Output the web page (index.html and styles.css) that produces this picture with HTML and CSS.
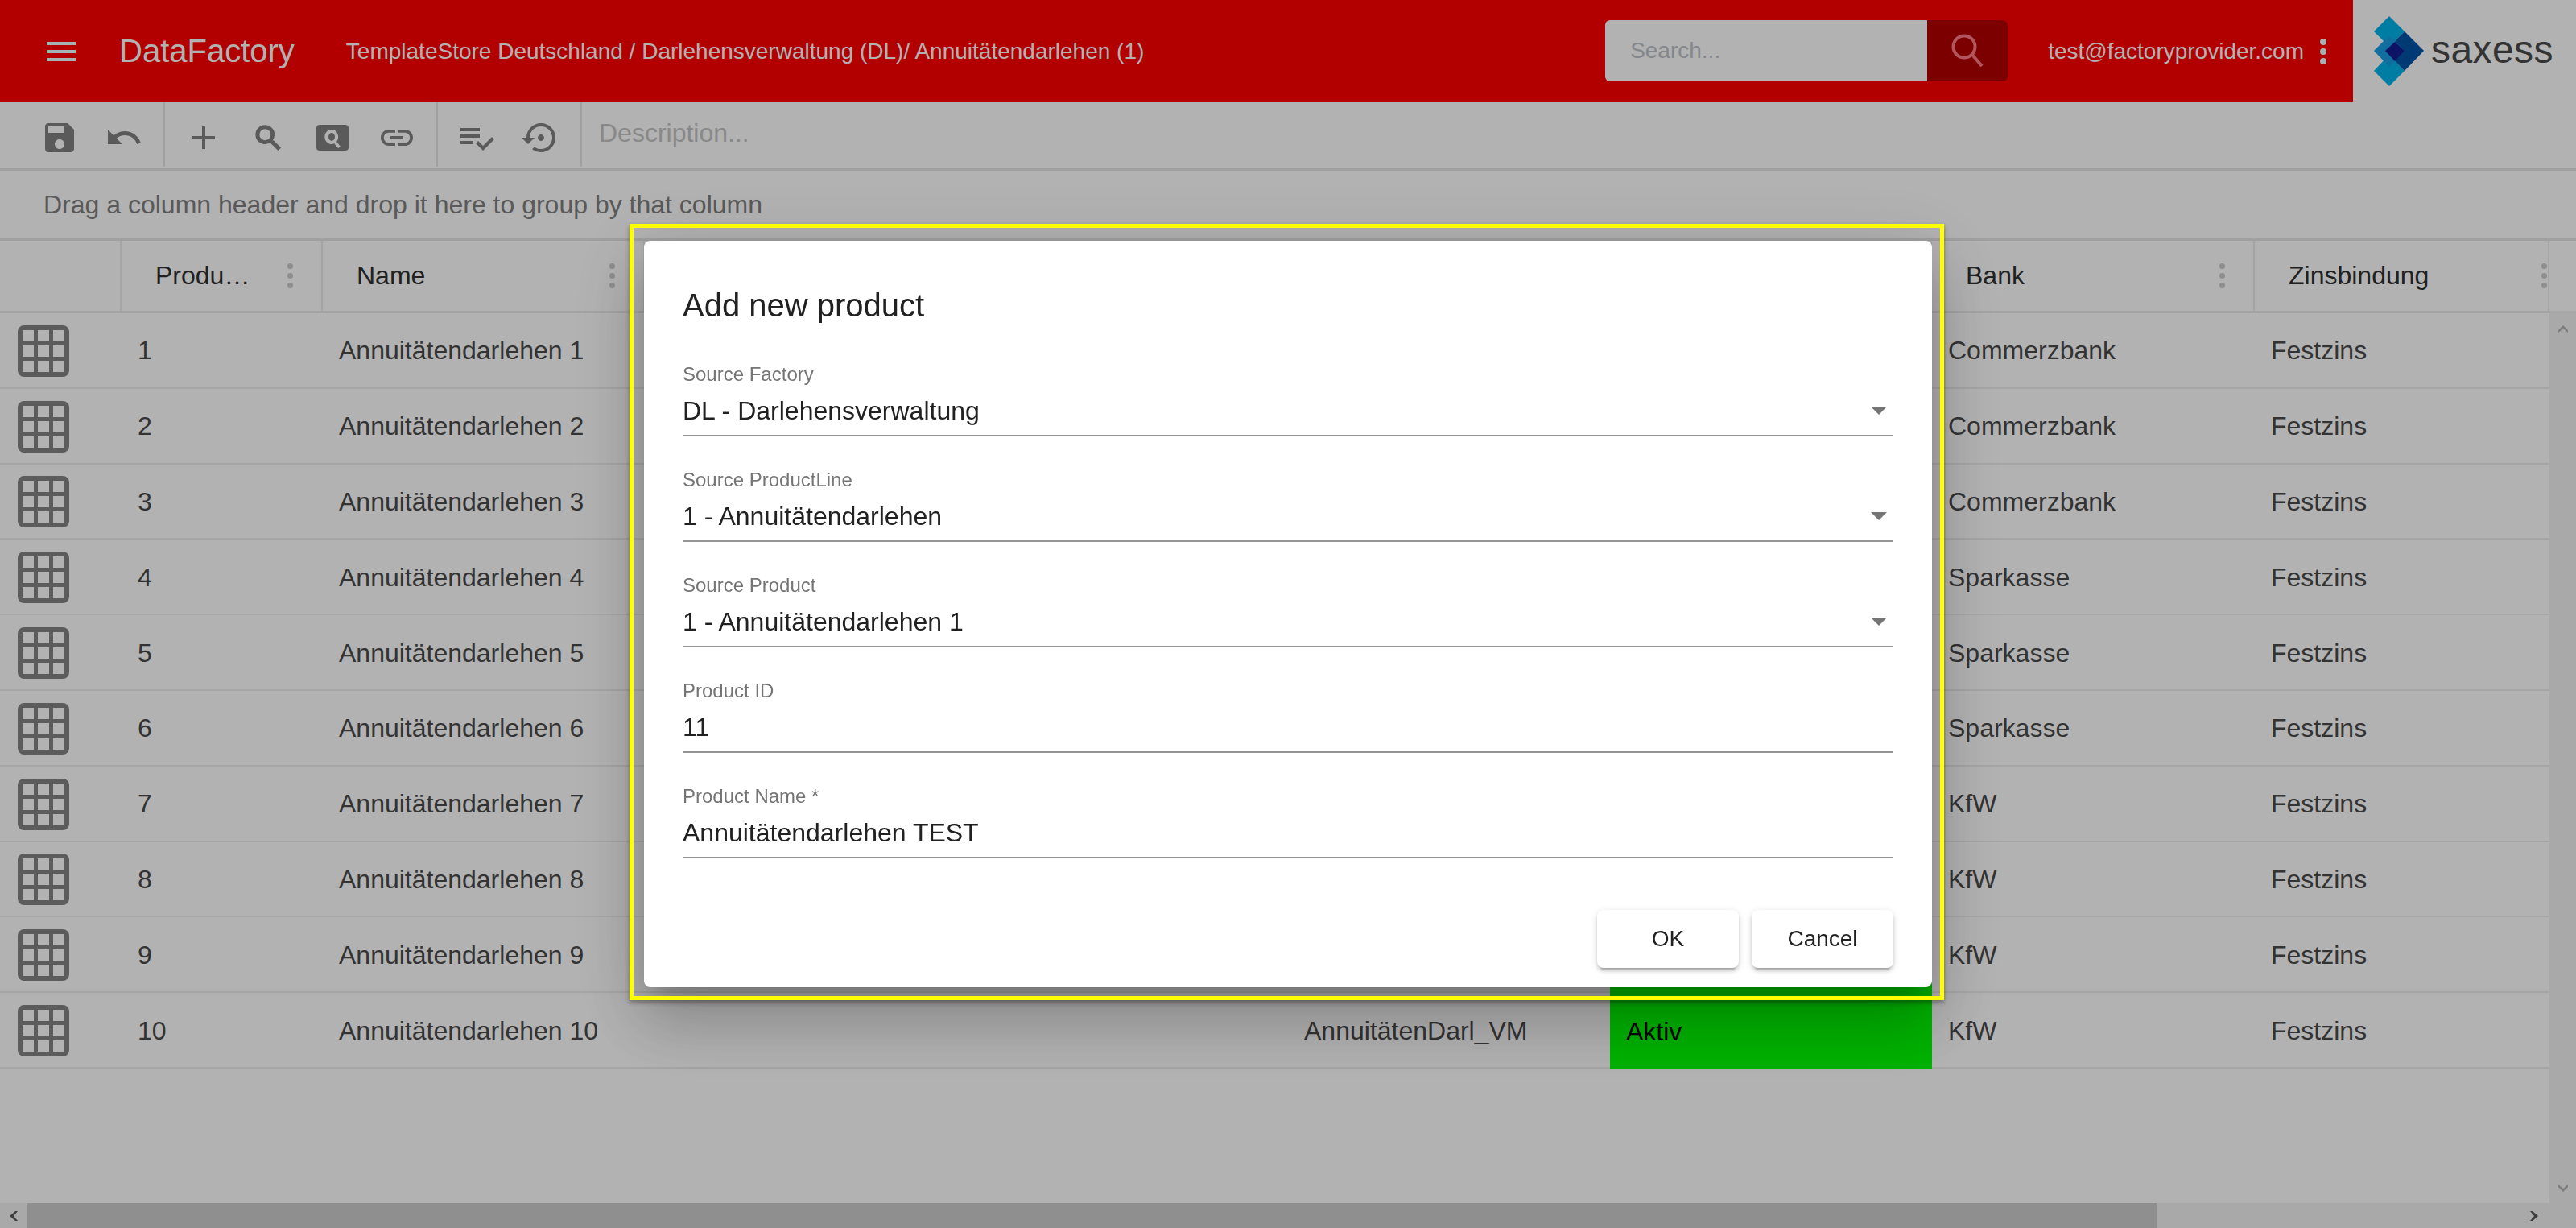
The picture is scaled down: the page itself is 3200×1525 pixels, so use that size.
FILE: index.html
```html
<!DOCTYPE html>
<html lang="en">
<head>
  <meta charset="UTF-8">
  <title>DataFactory - Add new product</title>
  <link rel="stylesheet" href="styles.css">
</head>
<body>

  <svg class="defs" width="0" height="0">
    <symbol id="i-grid" viewBox="0 0 64 64">
      <path fill-rule="evenodd" d="M8 0h48a8 8 0 0 1 8 8v48a8 8 0 0 1-8 8H8a8 8 0 0 1-8-8V8a8 8 0 0 1 8-8zM6 6v14h14V6zM25 6v14h14V6zM44 6v14h14V6zM6 25v14h14V25zM25 25v14h14V25zM44 25v14h14V25zM6 44v14h14V44zM25 44v14h14V44zM44 44v14h14V44z"/>
    </symbol>
    <symbol id="i-search" viewBox="0 0 24 24">
      <path d="M15.5 14h-.79l-.28-.27C15.41 12.59 16 11.11 16 9.5 16 5.91 13.09 3 9.5 3S3 5.91 3 9.5 5.91 16 9.5 16c1.61 0 3.09-.59 4.23-1.57l.27.28v.79l5 4.99L20.49 19l-4.99-5zm-6 0C7.01 14 5 11.99 5 9.5S7.01 5 9.5 5 14 7.01 14 9.5 11.99 14 9.5 14z"/>
    </symbol>
  </svg>

  <div class="page">
    <header class="topbar">
      <div class="burger"><span></span><span></span><span></span></div>
      <div class="brand">DataFactory</div>
      <div class="crumbs">TemplateStore Deutschland / Darlehensverwaltung (DL)/ Annuitätendarlehen (1)</div>
      <div class="search">
        <div class="search-input">Search...</div>
        <div class="search-btn">
          <svg class="search-icon" viewBox="0 0 41 41">
            <circle cx="16" cy="16" r="13.5"/>
            <line x1="26" y1="26" x2="38" y2="40"/>
          </svg>
        </div>
      </div>
      <div class="user">test@factoryprovider.com</div>
      <div class="user-menu"><span></span><span></span><span></span></div>
      <div class="logo">
        <svg class="logo-mark" viewBox="0 0 63 87">
          <polygon fill="#00b4e9" points="19,0 38,19 19,38 0,19"/>
          <polygon fill="#00b4e9" points="19,48 38,68 19,87 0,68"/>
          <polygon fill="#0053a7" points="38,19 62,43 38,68 14,43"/>
          <polygon fill="#179fe3" points="19,24 38,43 19,63 0,43"/>
          <polygon fill="#131d92" points="26,32 38,43 26,56 14,43"/>
        </svg>
        <span class="logo-text">saxess</span>
      </div>
    </header>

    <div class="toolbar">
      <div class="tool"><svg viewBox="0 0 24 24"><path d="M17 3H5c-1.11 0-2 .9-2 2v14c0 1.1.89 2 2 2h14c1.1 0 2-.9 2-2V7l-4-4zm-5 16c-1.66 0-3-1.34-3-3s1.34-3 3-3 3 1.34 3 3-1.34 3-3 3zm3-10H5V5h10v4z"/></svg></div>
      <div class="tool"><svg viewBox="0 0 24 24"><path d="M12.5 8c-2.65 0-5.05.99-6.9 2.6L2 7v9h9l-3.62-3.62c1.39-1.16 3.16-1.88 5.12-1.88 3.54 0 6.55 2.31 7.6 5.5l2.37-.78C21.08 11.03 17.15 8 12.5 8z"/></svg></div>
      <div class="sep"></div>
      <div class="tool"><svg viewBox="0 0 24 24"><path d="M19 13h-6v6h-2v-6H5v-2h6V5h2v6h6v2z"/></svg></div>
      <div class="tool"><svg class="tool-small"><use href="#i-search"/></svg></div>
      <div class="tool">
        <svg class="tool-box" viewBox="0 0 40 32">
          <path fill-rule="evenodd" d="M4 0h32a4 4 0 0 1 4 4v24a4 4 0 0 1-4 4H4a4 4 0 0 1-4-4V4a4 4 0 0 1 4-4zM19 6a8 9 0 1 0 3 17l5 6 3-2-5-6a8 9 0 0 0-6-15zM19 10a4 5 0 1 1 0 10a4 5 0 0 1 0-10z"/>
        </svg>
      </div>
      <div class="tool"><svg viewBox="0 0 24 24"><path d="M3.9 12c0-1.71 1.39-3.1 3.1-3.1h4V7H7c-2.76 0-5 2.24-5 5s2.24 5 5 5h4v-1.9H7c-1.71 0-3.1-1.39-3.1-3.1zM8 13h8v-2H8v2zm9-6h-4v1.9h4c1.71 0 3.1 1.39 3.1 3.1s-1.39 3.1-3.1 3.1h-4V17h4c2.76 0 5-2.24 5-5s-2.24-5-5-5z"/></svg></div>
      <div class="sep"></div>
      <div class="tool"><svg viewBox="0 0 24 24"><path d="M14 10H2v2h12v-2zm0-4H2v2h12V6zM2 16h8v-2H2v2zm19.5-4.5L23 13l-6.99 7-4.51-4.5L13 14l3.01 3 5.49-5.5z"/></svg></div>
      <div class="tool"><svg viewBox="0 0 24 24"><path d="M14 12c0-1.1-.9-2-2-2s-2 .9-2 2 .9 2 2 2 2-.9 2-2zm-2-9c-4.97 0-9 4.03-9 9H0l4 4 4-4H5c0-3.87 3.13-7 7-7s7 3.13 7 7-3.13 7-7 7c-1.51 0-2.91-.49-4.06-1.3l-1.42 1.44C8.04 20.3 9.94 21 12 21c4.97 0 9-4.03 9-9s-4.03-9-9-9z"/></svg></div>
      <div class="sep"></div>
      <div class="description">Description...</div>
    </div>

    <div class="group-panel">Drag a column header and drop it here to group by that column</div>

    <div class="grid-head">
      <div class="th"></div>
      <div class="th"><span class="th-label">Product ID</span><span class="dots"></span></div>
      <div class="th"><span class="th-label">Name</span><span class="dots"></span></div>
      <div class="th"></div>
      <div class="th"></div>
      <div class="th"></div>
      <div class="th"><span class="th-label">Bank</span><span class="dots"></span></div>
      <div class="th th-last"><span class="th-label">Zinsbindung</span><span class="dots"></span></div>
      <div class="th-rest"></div>
    </div>

    <div class="grid-body">
      <div class="rows">
        <div class="row"><div class="td td-icon"><svg class="row-icon"><use href="#i-grid"/></svg></div><div class="td">1</div><div class="td">Annuitätendarlehen 1</div><div class="td"></div><div class="td"></div><div class="td td-status"></div><div class="td">Commerzbank</div><div class="td">Festzins</div></div>
        <div class="row"><div class="td td-icon"><svg class="row-icon"><use href="#i-grid"/></svg></div><div class="td">2</div><div class="td">Annuitätendarlehen 2</div><div class="td"></div><div class="td"></div><div class="td td-status"></div><div class="td">Commerzbank</div><div class="td">Festzins</div></div>
        <div class="row"><div class="td td-icon"><svg class="row-icon"><use href="#i-grid"/></svg></div><div class="td">3</div><div class="td">Annuitätendarlehen 3</div><div class="td"></div><div class="td"></div><div class="td td-status"></div><div class="td">Commerzbank</div><div class="td">Festzins</div></div>
        <div class="row"><div class="td td-icon"><svg class="row-icon"><use href="#i-grid"/></svg></div><div class="td">4</div><div class="td">Annuitätendarlehen 4</div><div class="td"></div><div class="td"></div><div class="td td-status"></div><div class="td">Sparkasse</div><div class="td">Festzins</div></div>
        <div class="row"><div class="td td-icon"><svg class="row-icon"><use href="#i-grid"/></svg></div><div class="td">5</div><div class="td">Annuitätendarlehen 5</div><div class="td"></div><div class="td"></div><div class="td td-status"></div><div class="td">Sparkasse</div><div class="td">Festzins</div></div>
        <div class="row"><div class="td td-icon"><svg class="row-icon"><use href="#i-grid"/></svg></div><div class="td">6</div><div class="td">Annuitätendarlehen 6</div><div class="td"></div><div class="td"></div><div class="td td-status"></div><div class="td">Sparkasse</div><div class="td">Festzins</div></div>
        <div class="row"><div class="td td-icon"><svg class="row-icon"><use href="#i-grid"/></svg></div><div class="td">7</div><div class="td">Annuitätendarlehen 7</div><div class="td"></div><div class="td"></div><div class="td td-status"></div><div class="td">KfW</div><div class="td">Festzins</div></div>
        <div class="row"><div class="td td-icon"><svg class="row-icon"><use href="#i-grid"/></svg></div><div class="td">8</div><div class="td">Annuitätendarlehen 8</div><div class="td"></div><div class="td"></div><div class="td td-status"></div><div class="td">KfW</div><div class="td">Festzins</div></div>
        <div class="row"><div class="td td-icon"><svg class="row-icon"><use href="#i-grid"/></svg></div><div class="td">9</div><div class="td">Annuitätendarlehen 9</div><div class="td"></div><div class="td"></div><div class="td td-status"></div><div class="td">KfW</div><div class="td">Festzins</div></div>
        <div class="row"><div class="td td-icon"><svg class="row-icon"><use href="#i-grid"/></svg></div><div class="td">10</div><div class="td">Annuitätendarlehen 10</div><div class="td"></div><div class="td">AnnuitätenDarl_VM</div><div class="td td-status">Aktiv</div><div class="td">KfW</div><div class="td">Festzins</div></div>
      </div>
      <div class="vscroll">
        <svg class="chev-v" viewBox="0 0 12 9"><path d="M0 6l6-6 6 6v3L6 4 0 9z"/></svg>
        <svg class="chev-v" viewBox="0 0 12 9"><path d="M0 0l6 5 6-5v3L6 9 0 3z"/></svg>
      </div>
    </div>

    <div class="hscroll">
      <div class="hscroll-btn"><svg class="chev-h" viewBox="0 0 10 12"><path d="M10 0H7L0 6l7 6h3L5 6z"/></svg></div>
      <div class="hscroll-thumb"></div>
      <div class="hscroll-track"><svg class="chev-h" viewBox="0 0 10 12"><path d="M0 0h3l7 6-7 6H0l5-6z"/></svg></div>
    </div>
  </div>

  <div class="overlay">
    <div class="dialog">
      <h2 class="dialog-title">Add new product</h2>

      <div class="field field-select">
        <label class="field-label">Source Factory</label>
        <div class="field-value">DL - Darlehensverwaltung</div>
      </div>
      <div class="field field-select">
        <label class="field-label">Source ProductLine</label>
        <div class="field-value">1 - Annuitätendarlehen</div>
      </div>
      <div class="field field-select">
        <label class="field-label">Source Product</label>
        <div class="field-value">1 - Annuitätendarlehen 1</div>
      </div>
      <div class="field">
        <label class="field-label">Product ID</label>
        <div class="field-value">11</div>
      </div>
      <div class="field">
        <label class="field-label">Product Name *</label>
        <div class="field-value">Annuitätendarlehen TEST</div>
      </div>

      <div class="dialog-actions">
        <button class="btn" type="button">OK</button>
        <button class="btn" type="button">Cancel</button>
      </div>
    </div>
    <div class="highlight"></div>
  </div>

</body>
</html>
```

FILE: styles.css
```css
* {
  box-sizing: border-box;
}
html, body {
  margin: 0;
  height: 100%;
  overflow: hidden;
}
body {
  font-family: "Liberation Sans", Arial, sans-serif;
  font-size: 32px;
  background-color: #fff;
  color: #494949;
}
.defs {
  position: absolute;
}
.page {
  display: flex;
  flex-direction: column;
  height: 1525px;
}

/* top bar */
.topbar {
  display: flex;
  align-items: center;
  height: 127px;
  flex: none;
  background-color: #ff0000;
  color: #fff;
}
.burger {
  display: flex;
  flex-direction: column;
  justify-content: space-between;
  width: 36px;
  height: 24px;
  margin-left: 58px;
}
.burger span {
  display: block;
  height: 4px;
  background-color: #f0ffff;
}
.brand {
  margin-left: 54px;
  font-size: 40px;
}
.crumbs {
  margin-left: 64px;
  font-size: 28px;
  flex: 1;
}
.search {
  display: flex;
  height: 76px;
  width: 500px;
  margin-top: -2px;
}
.search-input {
  flex: 1;
  padding-left: 31px;
  line-height: 76px;
  font-size: 28px;
  color: #bdc2c8;
  background-color: #fff;
  border-radius: 6px 0 0 6px;
}
.search-btn {
  display: flex;
  align-items: center;
  justify-content: center;
  width: 100px;
  background-color: #b30000;
  border-radius: 0 6px 6px 0;
}
.search-icon {
  width: 41px;
  height: 41px;
  fill: none;
  stroke: #ff7b86;
  stroke-width: 4;
}
.user {
  margin-left: 50px;
  font-size: 28px;
}
.user-menu {
  display: flex;
  flex-direction: column;
  gap: 4px;
  width: 8px;
  margin-left: 20px;
}
.user-menu span {
  width: 8px;
  height: 8px;
  border-radius: 50%;
  background-color: #f0ffff;
}
.logo {
  display: flex;
  align-items: center;
  width: 277px;
  height: 127px;
  margin-left: 33px;
  padding-left: 26px;
  background-color: #fff;
}
.logo-mark {
  width: 63px;
  height: 87px;
  flex: none;
}
.logo-text {
  margin-left: 8px;
  margin-top: -4px;
  font-size: 48px;
  letter-spacing: .4px;
  color: #494949;
}

/* toolbar */
.toolbar {
  display: flex;
  align-items: stretch;
  height: 85px;
  flex: none;
  padding-left: 34px;
  border-bottom: 3px solid #e5e5e5;
}
.tool {
  display: flex;
  align-items: center;
  justify-content: center;
  width: 80px;
  height: 80px;
  margin-top: 4px;
}
.tool svg {
  width: 48px;
  height: 48px;
  fill: #828282;
}
.tool .tool-small {
  width: 41px;
  height: 41px;
  stroke: #828282;
  stroke-width: .9;
}
.tool .tool-box {
  width: 40px;
  height: 32px;
}
.sep {
  width: 2px;
  height: 80px;
  margin: 0 8px 0 9px;
  background-color: #e5e5e5;
}
.description {
  margin-left: 13px;
  margin-top: 20px;
  color: #c4c4c4;
}

/* group panel */
.group-panel {
  height: 87px;
  flex: none;
  padding: 24px 0 0 54px;
  color: #808080;
  border-bottom: 3px solid #e5e5e5;
}

/* grid */
.grid-head {
  display: grid;
  grid-template-columns: 151px 250px 400px 799px 400px 400px 401px 366px 33px;
  height: 90px;
  flex: none;
  border-bottom: 3px solid #ededed;
  color: #303030;
}
.th {
  display: flex;
  align-items: center;
  min-width: 0;
  padding-left: 42px;
  padding-right: 35px;
  border-right: 2px solid #ededed;
}
.th-last {
  padding-right: 1px;
  overflow: hidden;
}
.th-rest {
  background-color: #fff;
}
.th-label {
  flex: 1;
  min-width: 0;
  margin-right: 38px;
  white-space: nowrap;
  overflow: hidden;
  text-overflow: ellipsis;
}
.dots {
  width: 7px;
  height: 7px;
  flex: none;
  border-radius: 50%;
  background-color: #ccc;
  box-shadow: 0 -12px 0 #ccc, 0 12px 0 #ccc;
}
.grid-body {
  display: flex;
  flex: 1;
  min-height: 0;
}
.rows {
  flex: 1;
  min-width: 0;
  overflow: hidden;
}
.row {
  display: grid;
  grid-template-columns: 151px 250px 400px 799px 400px 400px 401px 366px;
  height: 93.8px;
}
.td {
  display: flex;
  align-items: center;
  padding-top: 2px;
  padding-left: 20px;
  border-bottom: 2px solid #ededed;
  white-space: nowrap;
}
.td-icon {
  padding-left: 22px;
}
.row-icon {
  width: 64px;
  height: 64px;
  fill: #848484;
}
.td-status {
  background-color: #00ff00;
  color: #000;
  border-bottom: none;
}
.vscroll {
  display: flex;
  flex-direction: column;
  justify-content: space-between;
  align-items: center;
  width: 33px;
  padding: 15px 0 14px;
  background-color: #f3f3f3;
}
.chev-v {
  width: 12px;
  height: 9px;
  fill: #b4b4b4;
}
.hscroll {
  display: flex;
  height: 31px;
  flex: none;
  background-color: #f3f3f3;
}
.hscroll-btn {
  display: flex;
  align-items: center;
  justify-content: center;
  width: 34px;
}
.hscroll-thumb {
  width: 2645px;
  background-color: #cdcdcd;
}
.hscroll-track {
  display: flex;
  align-items: center;
  justify-content: flex-end;
  flex: 1;
  padding-right: 47px;
}
.chev-h {
  width: 10px;
  height: 12px;
  fill: #5a5a5a;
}

/* modal */
.overlay {
  position: fixed;
  inset: 0;
  display: flex;
  align-items: center;
  justify-content: center;
  background-color: rgba(0, 0, 0, 0.3);
}
.dialog {
  width: 1600px;
  height: 927px;
  padding: 56px 48px 24px;
  background-color: #fff;
  border-radius: 8px;
  box-shadow: 0 22px 30px -14px rgba(0, 0, 0, .2), 0 48px 76px 6px rgba(0, 0, 0, .14), 0 18px 92px 16px rgba(0, 0, 0, .12);
  color: #212121;
}
.dialog-title {
  height: 48px;
  margin: 0 0 8px;
  font-size: 40px;
  font-weight: normal;
  line-height: 48px;
}
.field {
  position: relative;
  height: 131px;
  padding-top: 40px;
  border-bottom: 2px solid #949494;
}
.field-label {
  display: block;
  height: 28px;
  font-size: 24px;
  line-height: 28px;
  color: #757575;
}
.field-value {
  margin-top: 11px;
  line-height: 40px;
}
.field-select::after {
  content: "";
  position: absolute;
  right: 8px;
  bottom: 25px;
  border-left: 10px solid transparent;
  border-right: 10px solid transparent;
  border-top: 10px solid #757575;
}
.dialog-actions {
  display: flex;
  justify-content: flex-end;
  gap: 16px;
  margin-top: 64px;
}
.btn {
  width: 176px;
  height: 72px;
  padding: 0;
  font-family: inherit;
  font-size: 28px;
  color: #212121;
  background-color: #fff;
  border: none;
  border-radius: 8px;
  box-shadow: 0 6px 2px -4px rgba(0, 0, 0, .2), 0 4px 4px 0 rgba(0, 0, 0, .14), 0 2px 10px 0 rgba(0, 0, 0, .12);
}
.highlight {
  position: absolute;
  left: 782px;
  top: 278px;
  width: 1633px;
  height: 964px;
  border: 5px solid #ffff00;
  box-shadow: 0 3px 6px rgba(0, 0, 0, .35);
}
```
